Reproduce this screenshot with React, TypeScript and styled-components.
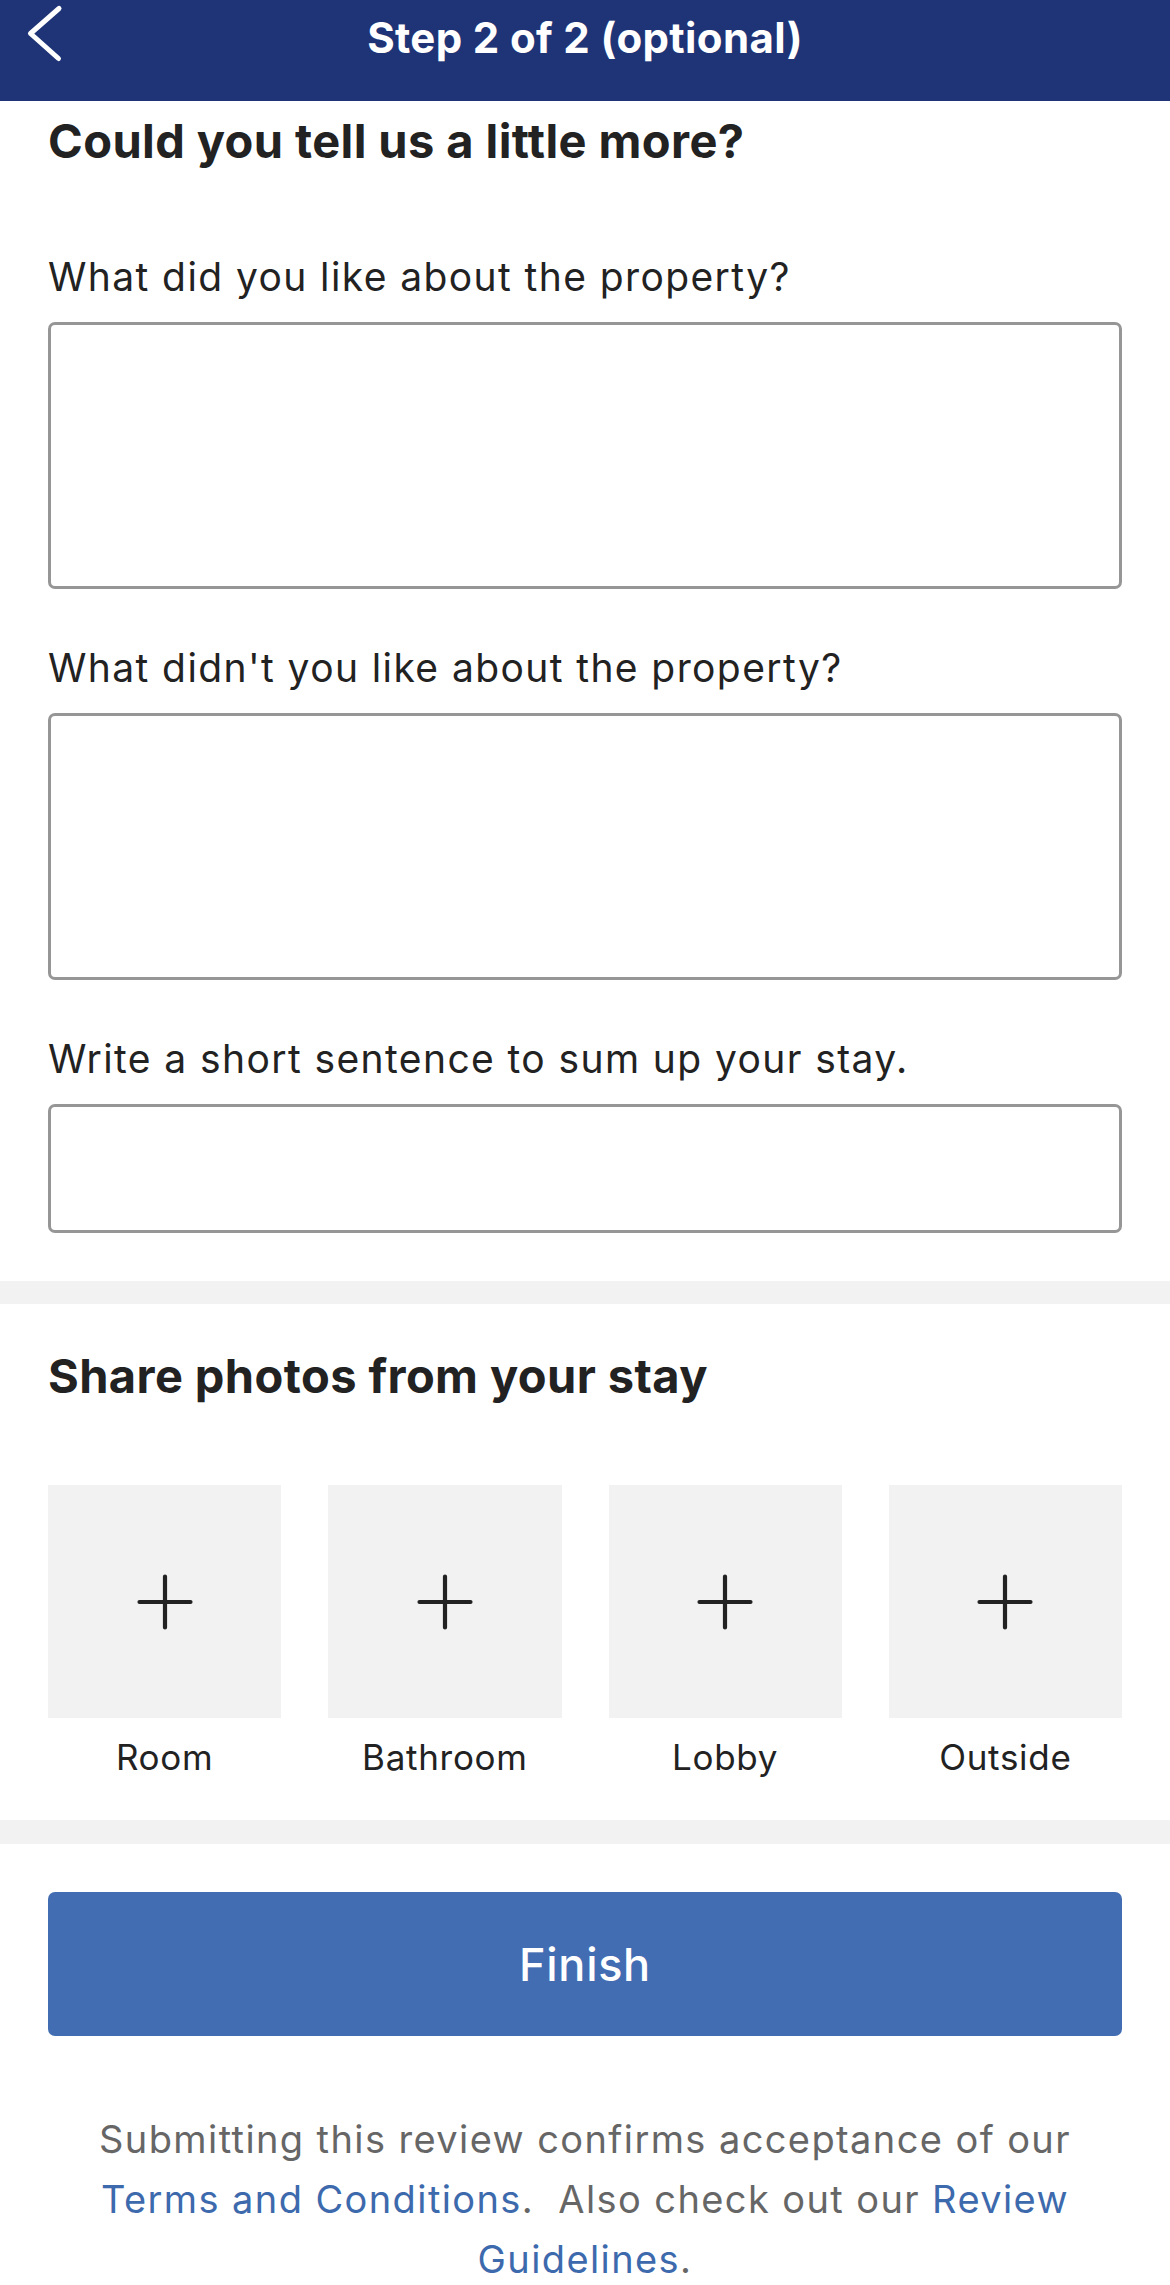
import React from "react";
import styled, { createGlobalStyle } from "styled-components";

const GlobalStyle = createGlobalStyle`
  html, body {
    margin: 0;
    padding: 0;
    background: #ffffff;
    overflow: hidden;
  }
  body {
    font-family: Inter, "Noto Sans", "Liberation Sans", sans-serif;
    color: #222222;
    -webkit-font-smoothing: antialiased;
  }
  * { box-sizing: border-box; }
`;

const Page = styled.div`
  width: 1170px;
  background: #ffffff;
  display: flex;
  flex-direction: column;
`;

const Header = styled.header`
  height: 101px;
  background: #1e3476;
  display: grid;
  grid-template-columns: 1fr auto 1fr;
  align-items: start;
`;

const BackButton = styled.button`
  justify-self: start;
  background: none;
  border: none;
  padding: 2px 0 0 24px;
  margin: 0;
  cursor: pointer;
  display: flex;
`;

const Title = styled.h1`
  margin: 0;
  padding-top: 12px;
  font-size: 42px;
  line-height: 52px;
  font-weight: 700;
  color: #ffffff;
  letter-spacing: 0.35px;
`;

const Section = styled.section<{ $top: number; $bottom: number }>`
  padding: ${(p) => p.$top}px 48px ${(p) => p.$bottom}px 48px;
  display: flex;
  flex-direction: column;
`;

const SectionTitle = styled.h2`
  margin: 0;
  font-size: 47px;
  line-height: 56px;
  font-weight: 700;
  color: #222222;
  letter-spacing: 0.4px;
`;

const Field = styled.label<{ $first?: boolean }>`
  display: flex;
  flex-direction: column;
  margin-top: ${(p) => (p.$first ? 85 : 56)}px;
`;

const FieldLabel = styled.span`
  font-size: 39px;
  line-height: 46px;
  font-weight: 400;
  color: #222222;
  letter-spacing: 1.4px;
  margin-bottom: 22px;
`;

const TextBox = styled.textarea<{ $height: number }>`
  display: block;
  width: 100%;
  height: ${(p) => p.$height}px;
  border: 3px solid #969696;
  border-radius: 7px;
  background: #ffffff;
  resize: none;
  outline: none;
  padding: 12px 16px;
  font-family: inherit;
  font-size: 36px;
  color: #222222;
`;

const Divider = styled.div<{ $h: number }>`
  height: ${(p) => p.$h}px;
  background: #f2f2f2;
`;

const PhotoGrid = styled.div`
  margin-top: 81px;
  display: grid;
  grid-template-columns: repeat(4, 1fr);
  column-gap: 47px;
`;

const PhotoSlot = styled.button`
  display: flex;
  flex-direction: column;
  align-items: center;
  background: none;
  border: none;
  padding: 0;
  margin: 0;
  cursor: pointer;
  font-family: inherit;
`;

const PhotoTile = styled.span`
  width: 100%;
  aspect-ratio: 1 / 1;
  background: #f2f2f2;
  display: flex;
  align-items: center;
  justify-content: center;
`;

const PhotoLabel = styled.span`
  margin-top: 18px;
  font-size: 35px;
  line-height: 42px;
  font-weight: 400;
  color: #222222;
  letter-spacing: 0.7px;
`;

const Footer = styled.footer`
  padding: 48px 48px 0 48px;
  display: flex;
  flex-direction: column;
`;

const FinishButton = styled.button`
  height: 144px;
  width: 100%;
  border: none;
  border-radius: 7px;
  background: #426db3;
  color: #ffffff;
  font-family: inherit;
  font-size: 45px;
  font-weight: 500;
  letter-spacing: 0.7px;
  cursor: pointer;
`;

const Legal = styled.p`
  margin: 73px 0 0 0;
  text-align: center;
  font-size: 38px;
  line-height: 60px;
  font-weight: 400;
  color: #666666;
  letter-spacing: 1.4px;
  white-space: pre-wrap;
  padding: 0 20px;
`;

const LegalLink = styled.a`
  color: #3d69ad;
  text-decoration: none;
`;

const Chevron = () => (
  <svg width="42" height="64" viewBox="0 0 42 64" fill="none">
    <path
      d="M35 6.5 L6.5 31.5 L34.5 56.5"
      stroke="#ffffff"
      strokeWidth="5"
      strokeLinecap="round"
      strokeLinejoin="round"
    />
  </svg>
);

const Plus = () => (
  <svg width="56" height="56" viewBox="0 0 56 56" fill="none">
    <path
      d="M28 2.5 V53.5 M2.5 28 H53.5"
      stroke="#222222"
      strokeWidth="4.2"
      strokeLinecap="round"
    />
  </svg>
);

const photoSlots = ["Room", "Bathroom", "Lobby", "Outside"];

export default function App() {
  return (
    <>
      <GlobalStyle />
      <Page>
        <Header>
          <BackButton aria-label="Back">
            <Chevron />
          </BackButton>
          <Title>Step 2 of 2 (optional)</Title>
          <span />
        </Header>

        <Section $top={12} $bottom={48}>
          <SectionTitle>Could you tell us a little more?</SectionTitle>
          <Field $first>
            <FieldLabel>What did you like about the property?</FieldLabel>
            <TextBox $height={267} />
          </Field>
          <Field>
            <FieldLabel>What didn't you like about the property?</FieldLabel>
            <TextBox $height={267} />
          </Field>
          <Field>
            <FieldLabel>Write a short sentence to sum up your stay.</FieldLabel>
            <TextBox $height={129} />
          </Field>
        </Section>

        <Divider $h={23} />

        <Section $top={44} $bottom={42}>
          <SectionTitle>Share photos from your stay</SectionTitle>
          <PhotoGrid>
            {photoSlots.map((name) => (
              <PhotoSlot key={name}>
                <PhotoTile>
                  <Plus />
                </PhotoTile>
                <PhotoLabel>{name}</PhotoLabel>
              </PhotoSlot>
            ))}
          </PhotoGrid>
        </Section>

        <Divider $h={24} />

        <Footer>
          <FinishButton>Finish</FinishButton>
          <Legal>
            Submitting this review confirms acceptance of our{" "}
            <LegalLink href="#">Terms and Conditions</LegalLink>
            {".  Also check out our "}
            <LegalLink href="#">Review Guidelines</LegalLink>.
          </Legal>
        </Footer>
      </Page>
    </>
  );
}
